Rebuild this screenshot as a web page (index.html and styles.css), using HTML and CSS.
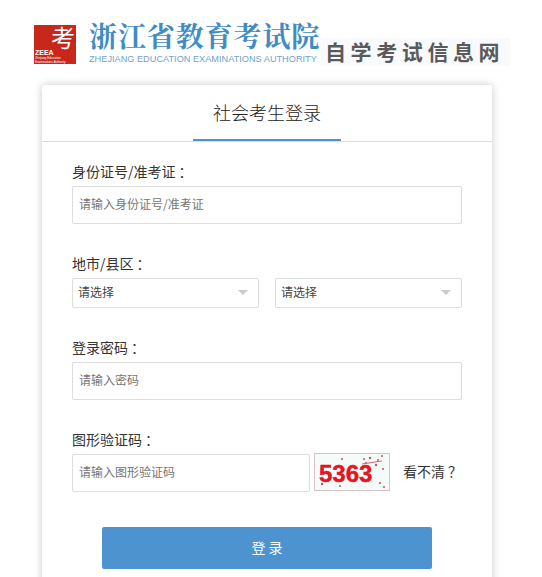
FILE: index.html
```html
<!DOCTYPE html>
<html lang="zh">
<head>
<meta charset="utf-8">
<title>社会考生登录</title>
<link rel="stylesheet" href="styles.css">
</head>
<body>
<header class="logo">
  <div class="badge">
    <span class="badge-char">考</span>
    <span class="badge-name">ZEEA</span>
    <span class="badge-sub">Zhejiang Education<br>Examinations Authority</span>
  </div>
  <div class="org">
    <div class="org-cn">浙江省教育考试院</div>
    <div class="org-en">ZHEJIANG EDUCATION EXAMINATIONS AUTHORITY</div>
  </div>
  <div class="site">自学考试信息网</div>
</header>
<main class="card">
  <div class="tabs"><div class="tab">社会考生登录</div></div>
  <form class="form">
    <div class="field field-id">
      <label class="label">身份证号/准考证<span class="punct">：</span></label>
      <div class="input">请输入身份证号/准考证</div>
    </div>
    <div class="field field-area">
      <label class="label">地市/县区<span class="punct">：</span></label>
      <div class="selects">
        <div class="select">请选择<i class="caret"></i></div>
        <div class="select">请选择<i class="caret"></i></div>
      </div>
    </div>
    <div class="field field-pw">
      <label class="label">登录密码<span class="punct">：</span></label>
      <div class="input">请输入密码</div>
    </div>
    <div class="field field-code">
      <label class="label">图形验证码<span class="punct">：</span></label>
      <div class="code-row">
        <div class="input input-code">请输入图形验证码</div>
        <div class="captcha">
          <svg width="76" height="38" viewBox="0 0 76 38">
            <rect x=".5" y=".5" width="75" height="37" fill="#f4fbf9" stroke="#d8c4c8"/>
            <g fill="#c9506a">
              <circle cx="50" cy="6" r="1"/><circle cx="56" cy="5" r="1.2"/><circle cx="64" cy="7" r="1"/><circle cx="68" cy="3" r="1"/>
              <circle cx="62" cy="12" r="1.2"/><circle cx="69" cy="16" r="1"/><circle cx="28" cy="6" r="1"/><circle cx="8" cy="31" r="1.2"/>
              <circle cx="26" cy="33" r="1"/><circle cx="70" cy="34" r="1"/><circle cx="66" cy="30" r="1"/><circle cx="52" cy="10" r="1"/>
            </g>
            <path d="M48 11 L68 8" stroke="#d9627c" stroke-width="1"/>
            <text x="5" y="29" class="captcha-text">5363</text>
          </svg>
        </div>
        <a class="refresh">看不清<span class="punct">？</span></a>
      </div>
    </div>
    <button type="button" class="submit">登 录</button>
  </form>
</main>
</body>
</html>
```
FILE: styles.css
```css
* { box-sizing: border-box; }
html, body { height: 577px; overflow: hidden; }
body {
  margin: 0;
  background: #fff;
  font-family: "Noto Sans CJK SC", "Liberation Sans", sans-serif;
  color: #333;
}
.logo {
  display: flex;
  align-items: flex-start;
  height: 85px;
  padding: 18px 0 0 30px;
}
.badge {
  width: 42px;
  height: 39px;
  margin: 7px 0 0 4px;
  background: #c8281a;
  color: #fff;
  display: flex;
  flex-direction: column;
  flex-shrink: 0;
}
.badge-char { height: 24px; padding-right: 1px; font-size: 24px; line-height: 24px; text-align: right; }
.badge-name { font: bold 7px/8px "Liberation Sans", sans-serif; padding-left: 1px; }
.badge-sub { font: 3px/3.5px "Liberation Sans", sans-serif; padding-left: 1px; white-space: nowrap; }
.org { width: 231px; margin-left: 13px; flex-shrink: 0; }
.org-cn {
  font-family: "Noto Serif CJK SC", "Noto Sans CJK SC", sans-serif;
  font-size: 28px;
  font-weight: 700;
  line-height: 35px;
  letter-spacing: .9px;
  white-space: nowrap;
  color: #3f8cc4;
}
.org-en {
  font: 9.2px/12px "Liberation Sans", sans-serif;
  color: #6fa3cc;
  white-space: nowrap;
}
.site {
  margin-top: 20px;
  padding-left: 5px;
  width: 190px;
  height: 28px;
  font-size: 21px;
  line-height: 26px;
  font-weight: 700;
  letter-spacing: 4.6px;
  color: #5a5a5a;
  background: #f8fafd;
  white-space: nowrap;
}
.card {
  width: 450px;
  height: 520px;
  margin-left: 42px;
  background: #fff;
  border-radius: 3px;
  box-shadow: 0 0 8px rgba(0, 0, 0, .22);
}
.tabs {
  height: 57px;
  border-bottom: 1px solid #ddd;
  display: flex;
  justify-content: center;
}
.tab {
  width: 148px;
  height: 56px;
  text-align: center;
  font-size: 18px;
  font-weight: 300;
  line-height: 54px;
  color: #222;
  border-bottom: 2px solid #4d93cf;
}
.form { padding: 0 30px; display: flex; flex-direction: column; }
.label { display: block; height: 20px; font-size: 14px; line-height: 18px; color: #333; }
.punct { padding-left: 3px; }
.field-id { margin-top: 20px; }
.field-area { margin-top: 30px; }
.field-pw { margin-top: 30px; }
.field-code { margin-top: 29px; }
.field-code .label { line-height: 20px; }
.input {
  height: 38px;
  margin-top: 4px;
  padding-left: 6px;
  border: 1px solid #ddd;
  border-radius: 2px;
  font-size: 12px;
  line-height: 34px;
  color: #757575;
}
.selects { display: flex; gap: 16px; margin-top: 4px; }
.select {
  flex: 1;
  height: 30px;
  padding-left: 5px;
  padding-bottom: 2px;
  border: 1px solid #ddd;
  border-radius: 2px;
  font-size: 12px;
  line-height: 26px;
  color: #444;
  display: flex;
  justify-content: space-between;
  align-items: center;
}
.caret {
  width: 0;
  height: 0;
  margin-right: 10px;
  border: 5px solid transparent;
  border-top: 5px solid #ccc;
  border-bottom: 0;
}
.code-row { display: flex; align-items: flex-start; margin-top: 4px; }
.input-code { width: 238px; margin-top: 1px; flex-shrink: 0; }
.captcha { width: 76px; height: 38px; margin-left: 4px; flex-shrink: 0; }
.captcha svg { display: block; filter: blur(.4px); }
.captcha-text { font: bold 24px "Liberation Sans", sans-serif; fill: #e8141e; stroke: #e8141e; stroke-width: .5px; }
.refresh { margin-left: 13px; font-size: 14px; line-height: 36px; color: #333; white-space: nowrap; }
.submit {
  width: 330px;
  height: 42px;
  margin: 35px 0 0 30px;
  padding: 0 0 2px;
  border: 0;
  border-radius: 2px;
  background: #4d93cf;
  color: #fff;
  font-family: inherit;
  font-size: 14px;
}
```
